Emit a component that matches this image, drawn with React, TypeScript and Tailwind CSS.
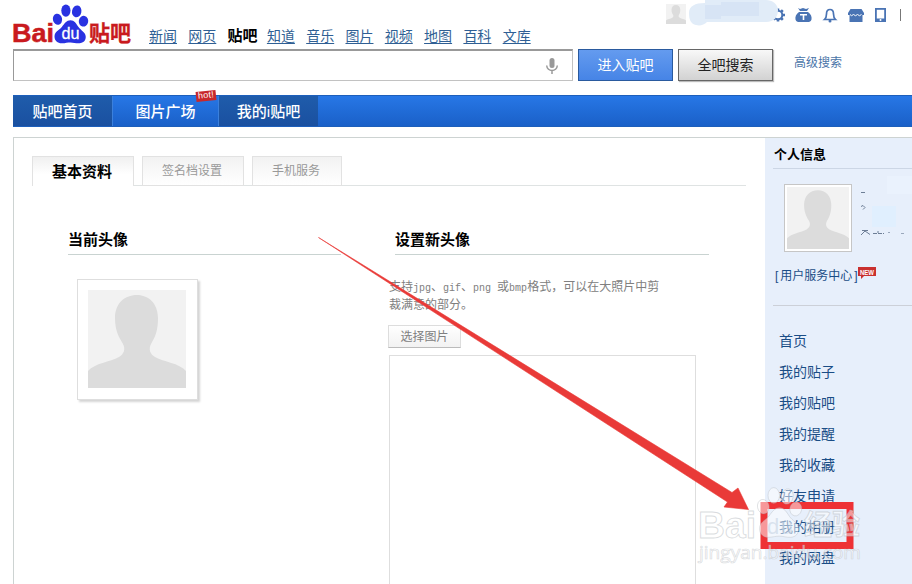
const channels = ['新闻', '网页', '贴吧', '知道', '音乐', '图片', '视频', '地图', '百科', '文库'];

const sideLinks = ['首页', '我的贴子', '我的贴吧', '我的提醒', '我的收藏', '好友申请', '我的相册', '我的网盘'];

// Paw print, drawn in a 36x40 box
function Paw() {
  return (
    <>
      <ellipse cx="5" cy="15.3" rx="4.6" ry="5.6" transform="rotate(-12 5 15.3)" />
      <ellipse cx="13.400" cy="6.600" rx="4.600" ry="6.100" />
      <ellipse cx="24.200" cy="7.400" rx="4.700" ry="6" transform="rotate(12 24.2 7.4)" />
      <ellipse cx="31" cy="17.200" rx="4.700" ry="5.400" transform="rotate(12 31 17.2)" />
      <path d="M18 16.300C14 16.300 12 19.600 9.500 22.800C7 26 2 27.500 2 32.500C2 37 5.500 39.500 9.500 39.300C13 39.100 15 38.400 18 38.400C21 38.400 23.500 39.500 27 39.300C31 39.100 33.600 36.200 33.200 32.300C32.800 28.200 28.500 26.500 26 23C23.500 19.500 22 16.300 18 16.300Z" />
    </>
  );
}

function Logo() {
  return (
    <svg width="124" height="48" viewBox="8 2 124 48" className="-ml-1 block">
      <g fill="#c91a1e" stroke="#c91a1e" fontWeight="bold">
        <text x="12" y="42" fontSize="26" strokeWidth=".5" fontFamily="Liberation Sans, sans-serif" textLength="42" lengthAdjust="spacingAndGlyphs">Bai</text>
        <text x="89" y="40.500" fontSize="21.500" strokeWidth=".3" fontFamily="Noto Sans CJK SC, sans-serif" textLength="42" lengthAdjust="spacingAndGlyphs">贴吧</text>
      </g>
      <g transform="translate(52.500 4)" fill="#2932e1">
        <Paw />
      </g>
      <text x="61.500" y="38.500" fontSize="17" fontFamily="Liberation Sans, sans-serif" fill="#fff" stroke="#fff" strokeWidth=".3" textLength="18" lengthAdjust="spacingAndGlyphs">du</text>
    </svg>
  );
}

function Silhouette({ className }: { className?: string }) {
  return (
    <svg viewBox="0 0 98 98" className={className} preserveAspectRatio="none">
      <rect width="98" height="98" fill="#f2f2f2" />
      <path
        fill="#dcdcdc"
        d="M49 5C61 5 70 14 70 28C70 41 67 47 63.500 53C60 59 62 64 67 67C76 72 91 73 98 81V98H0V81C7 73 22 72 31 67C36 64 38 59 34.500 53C31 47 27 41 27 28C27 14 36 5 49 5Z"
      />
    </svg>
  );
}

function UserBar() {
  return (
    <div className="flex h-8 items-start text-[#4a74b4]">
      <Silhouette className="mt-1 h-5 w-5" />
      <svg width="221" height="30" viewBox="0 0 221 30" fill="none">
        {/* Gear */}
        <g stroke="currentColor" strokeWidth="2">
          <circle cx="92" cy="15" r="4.300" />
          <path strokeWidth="2.600" d="M92 8.500v2M92 19.500v2M85.500 15h2M96.500 15h2.500M87.400 10.400l1.400 1.400M95.200 18.200l1.600 1.600M87.400 19.600l1.400-1.400M95.200 11.800l1.600-1.600" />
        </g>
        {/* Smudged user name */}
        <path fill="#e1ecf8" d="M3 13C3 6 9 3 19 3V0H80C86 0 92 4 92 10C92 17 88 22 80 22H21C18 25 14 26 10 25C5 24 3 20 3 13Z" />
        <path fill="#d7e4f5" d="M19 5H35V2H73V16H35V19H19Z" />
        {/* Money bag */}
        <path fill="currentColor" d="M112 8l2 1 3-1 3 1 3-1-2 3h-7zM113 12h9c3 2 4 5 3.500 7.500-.5 2-2 2.500-4 2.500h-8c-2 0-3.500-.5-4-2.500C109 17 110 14 113 12Z" />
        <path stroke="#fff" strokeWidth="1.600" d="M114 14.800h7M117.500 15v5" />
        {/* Bell */}
        <path stroke="currentColor" strokeWidth="1.700" d="M138.500 19.500h11c-1.800-1.700-2-3.500-2-5.500 0-2.800-1.300-4.500-3.500-4.500s-3.500 1.700-3.500 4.500c0 2-.2 3.800-2 5.500Z" />
        <circle cx="144" cy="21" r="1.500" fill="currentColor" />
        {/* Shop */}
        <path fill="currentColor" d="M164.500 9h11l2.500 4v2h-1.500v7h-13v-7H162v-2z" />
        <path stroke="#fff" strokeWidth="1" d="M164 14.500l1.500 1.200 2-1.200 2 1.200 2-1.200 2 1.200 2-1.200" />
        {/* Tablet */}
        <rect x="189.900" y="8.900" width="9.200" height="12.200" stroke="currentColor" strokeWidth="1.800" />
        <path fill="currentColor" d="M190 18.500h9V22h-9z" />
        <circle cx="194.500" cy="20" r="1" fill="#fff" />
        <path stroke="#777" d="M214.500 9v12" />
      </svg>
    </div>
  );
}

function Header() {
  return (
    <header className="h-[95px] pl-3">
      <div className="flex h-[49px] items-start">
        <div className="w-[137px] pt-0.5">
          <Logo />
        </div>
        <nav className="flex w-[517px] gap-[11.3px] pt-[25px] text-sm leading-[22px] text-[#2f5f94]">
          {channels.map((name) => (
            <a
              key={name}
              className={`w-7 shrink-0 whitespace-nowrap ${name === '贴吧' ? 'text-[15px] font-bold text-black' : 'underline underline-offset-2'}`}
            >
              {name}
            </a>
          ))}
        </nav>
        <UserBar />
      </div>
      <div className="flex h-8 pl-px">
        <div className="flex w-[560px] items-center justify-end border border-t-2 border-[#c2c2c2] border-t-[#999] border-l-[#999] bg-white pr-[13px]">
          <svg width="14" height="18" viewBox="0 0 14 18" fill="none">
            <rect x="4.500" y="1" width="5" height="10" rx="2.500" fill="#999" />
            <path d="M1.700 8.500C2 15 12 15 12.300 8.500M7 13.500V17" stroke="#999" strokeWidth="1.500" />
          </svg>
        </div>
        <button className="ml-[5px] w-[95px] border border-[#2a5a9e] bg-linear-to-b from-[#649bef] to-[#4684e6] text-sm text-white">进入贴吧</button>
        <button className="ml-[5px] w-[95px] border border-[#666] bg-linear-to-b from-[#f8f8f8] to-[#d2d2d2] text-sm text-[#222] shadow-[1px_1px_1px_#bbb]">全吧搜索</button>
        <a className="ml-[21px] text-xs leading-[29px] text-[#4a74a8]">高级搜索</a>
      </div>
    </header>
  );
}

function MainNav() {
  return (
    <nav className="ml-[13px] flex h-8 border-y border-[#1d5fbb] bg-linear-to-b from-[#2777e6] to-[#1a60c8] text-[15px] leading-[31px] font-medium text-white">
      <a className="w-[99px] bg-linear-to-b from-[#1f5cab] to-[#1a50a0] text-center">贴吧首页</a>
      <a className="relative w-[107px] border-x border-[#3b80dc] text-center">
        图片广场
        <span className="absolute -top-[5px] right-[2px] h-[10px] w-5 -rotate-6 bg-[#c8282b] text-center text-[9px] leading-[9px] tracking-wide">hot!</span>
      </a>
      <a className="w-[99px] bg-linear-to-b from-[#1f5cab] to-[#1a50a0] text-center">我的i贴吧</a>
    </nav>
  );
}

function ProfileTabs() {
  return (
    <div className="ml-[18px] flex h-[30px] w-[714px] text-xs leading-[29px] text-[#999]">
      <a className="w-[102px] border border-b-0 border-[#e2e2e2] bg-linear-to-b from-[#f0f0f0] to-white to-60% pr-0.5 text-center text-[15px] font-bold text-black">基本资料</a>
      <span className="w-2 border-b border-[#dfe3e3]" />
      <a className="w-[102px] border border-[#e2e2e2] bg-linear-to-b from-[#f2f2f2] to-white pr-0.5 text-center">签名档设置</a>
      <span className="w-2 border-b border-[#dfe3e3]" />
      <a className="w-[90px] border border-[#e2e2e2] bg-linear-to-b from-[#f2f2f2] to-white pr-0.5 text-center">手机服务</a>
      <span className="flex-1 border-b border-[#dfe3e3]" />
    </div>
  );
}

function Mono({ children }: { children: string }) {
  return <span className="font-['Liberation_Mono',monospace] text-[10px]">{children}</span>;
}

function Profile() {
  return (
    <main className="w-[752px] border-t border-l border-[#cdd3d2] pt-[18px]">
      <ProfileTabs />
      <div className="flex pt-[43px]">
        <section className="w-[320px] pl-[54px]">
          <h2 className="h-[26px] w-[273px] border-b border-[#c9d3d1] text-[15px] leading-[22px] font-bold">当前头像</h2>
          <div className="mt-6 ml-[9px] h-[121px] w-[121px] border border-[#dedede] bg-white p-[10px] shadow-[2px_2px_2px_#d5d5d5]">
            <Silhouette className="h-[98px] w-[98px]" />
          </div>
        </section>
        <section className="ml-[55px] w-[320px]">
          <h2 className="ml-1.5 h-[26px] w-[314px] border-b border-[#c9d3d1] text-[15px] leading-[22px] font-bold">设置新头像</h2>
          <p className="mt-[23px] h-9 w-[275px] text-xs leading-[18px] text-[#808080]">
            <span className="block h-[18px] whitespace-pre">
              支持<Mono>jpg</Mono>、<Mono>gif</Mono>、<Mono>png </Mono>或<Mono>bmp</Mono>格式，可以在大照片中剪
            </span>
            <span className="block h-[18px]">裁满意的部分。</span>
          </p>
          <button className="mt-[11px] -ml-px block h-[23px] w-[73px] border border-[#ddd] border-b-[#bbb] bg-linear-to-b from-white to-[#f2f2f2] text-xs text-[#808080]">选择图片</button>
          <div className="mt-[7px] h-[240px] w-[307px] border border-[#dedede]" />
        </section>
      </div>
    </main>
  );
}

function Sidebar() {
  return (
    <aside className="flex-1 border-t border-[#cdd3d2] bg-[#e7effb] pl-2">
      <h3 className="h-[31px] border-b border-[#ccd6e5] pl-px text-[13px] leading-[34px] font-bold">个人信息</h3>
      <div className="flex h-[83px] pt-[15px] pl-[11px]">
        <div className="h-[68px] w-[68px] border border-[#c6c6c6] bg-white p-0.5">
          <Silhouette className="h-full w-full" />
        </div>
        {/* Account details, mostly wiped out */}
        <svg width="60" height="68" viewBox="0 0 60 68" className="-mt-2 shrink-0">
          <path fill="#eaf2fd" d="M35 0h25v18H35z" />
          <path fill="#e0effe" d="M20 30h24v21H20z" />
          <g stroke="#6d7e96" fill="none" strokeWidth="1">
            <path d="M9 16.500h4M9 30.500l2-1 2 2-2 2M9 59l4-4 5 3.500M10 54.500h6" />
            <path d="M21 57.500h11M26 55v2" strokeDasharray="4 1" />
            <path d="M36 56.500h2M49 57.500h3" stroke="#9aa8bc" />
          </g>
        </svg>
      </div>
      <div className="flex h-[54px] border-b border-[#ccd0d8] pt-[15px] pl-0.5 text-xs leading-[18px] text-[#1a4d86]">
        <a className="w-[83px] whitespace-nowrap">
          [<span className="px-[2px]">用户服务中心</span>]
        </a>
        <svg width="19" height="13" viewBox="0 0 19 13">
          <path fill="#c9302f" d="M0 0h18v9H6l-3 3V9H0z" />
          <text x="2" y="7.500" fontSize="7" fontWeight="bold" fill="#fff" fontFamily="Liberation Sans, sans-serif" textLength="14" lengthAdjust="spacingAndGlyphs">NEW</text>
        </svg>
      </div>
      <ul className="pt-5 pl-[6px] text-sm leading-[31px] text-[#1a4d86]">
        {sideLinks.map((label) => (
          <li key={label}>{label}</li>
        ))}
      </ul>
    </aside>
  );
}

// Red arrow and frame pointing at the album link, with the site watermark on top
function Annotation() {
  return (
    <svg className="pointer-events-none absolute inset-0" width="912" height="584" viewBox="0 0 912 584">
      <path fill="#e93a38" stroke="#e93a38" strokeWidth=".6" d="M318.500 237.500L732 492.500L738 488L748.500 509.500L724 507L727.500 502Z" />
      <rect x="764" y="505.500" width="86" height="40" fill="none" stroke="#ee3135" strokeWidth="7" />
      <g fill="#fff" fillOpacity=".5" stroke="#b4b8be" strokeOpacity=".5" strokeWidth=".9">
        <text x="698" y="537.500" fontSize="36" fontWeight="bold" fontFamily="Liberation Sans, sans-serif" textLength="58" lengthAdjust="spacingAndGlyphs">Bai</text>
        <g transform="translate(757 487) scale(1.250 1.280)" strokeWidth=".6">
          <Paw />
        </g>
        <text x="804" y="535" fontSize="28" fontWeight="bold" fontFamily="Noto Sans CJK SC, sans-serif">经验</text>
        <text x="699" y="559" fontSize="19" strokeWidth=".7" fontFamily="Open Sans, sans-serif" textLength="162" lengthAdjust="spacingAndGlyphs">jingyan.baidu.com</text>
      </g>
      <text x="767" y="534" fontSize="22" fontFamily="Liberation Sans, sans-serif" fill="#c6d3e3" fillOpacity=".6" textLength="26">du</text>
    </svg>
  );
}

export default function App() {
  return (
    <div className="relative h-[584px] w-[912px] overflow-hidden bg-white font-['Liberation_Sans','Noto_Sans_CJK_SC',sans-serif] text-black">
      <Header />
      <MainNav />
      <div className="mt-[10px] ml-[13px] flex h-[447px]">
        <Profile />
        <Sidebar />
      </div>
      <Annotation />
    </div>
  );
}
